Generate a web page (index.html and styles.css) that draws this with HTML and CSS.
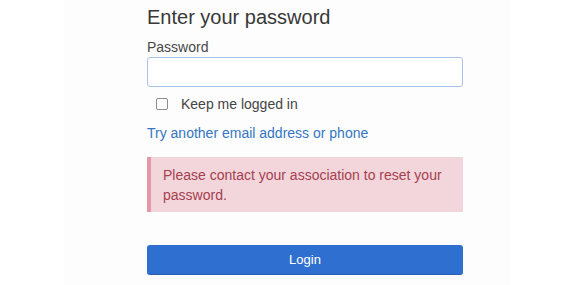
FILE: index.html
```html
<!DOCTYPE html>
<html lang="en">
<head>
    <meta charset="UTF-8">
    <meta name="viewport" content="width=device-width, initial-scale=1.0">
    <title>Login</title>
    <link rel="stylesheet" href="styles.css">
</head>
<body>
    <div id="painel">
        <form class="login-form">
            <h1>Enter your password</h1>
            <label class="rotulo" for="senha">Password</label>
            <input type="password" id="senha" class="campo">
            <label class="lembrar">
                <input type="checkbox" class="caixa">
                <span>Keep me logged in</span>
            </label>
            <a href="#" class="link-trocar">Try another email address or phone</a>
            <div class="alerta">Please contact your association to reset your password.</div>
            <button type="button" class="botao">Login</button>
        </form>
    </div>
</body>
</html>
```

FILE: styles.css
```css
body {
    margin: 0;
    background-color: #ffffff;
    font-family: "Liberation Sans", Arial, sans-serif;
    color: #3a3a3a;
}
#painel {
    margin-left: 64px;
    width: 447px;
    min-height: 285px;
    background-color: #fdfdfd;
    box-sizing: border-box;
    padding-left: 83px;
}
.login-form {
    width: 316px;
    display: flex;
    flex-direction: column;
}
h1 {
    margin: 5px 0 0 0;
    font-size: 20px;
    line-height: 24px;
    font-weight: normal;
    color: #383838;
}
.rotulo {
    margin-top: 10px;
    font-size: 14px;
    line-height: 16px;
    color: #474747;
}
.campo {
    margin: 2px 0 0 0;
    height: 30px;
    box-sizing: border-box;
    border: 1px solid #a8c3ea;
    border-radius: 3px;
    background-color: #ffffff;
    outline: none;
}
.lembrar {
    margin-top: 9px;
    display: flex;
    align-items: center;
    font-size: 14px;
    line-height: 16px;
    color: #444444;
}
.caixa {
    appearance: none;
    -webkit-appearance: none;
    box-sizing: border-box;
    width: 12px;
    height: 12px;
    margin: 0 13px 0 9px;
    border: 1px solid #8c8c8c;
    border-radius: 2px;
    background-color: #ffffff;
}
.link-trocar {
    margin-top: 13px;
    font-size: 14px;
    line-height: 16px;
    color: #3476c4;
    text-decoration: none;
}
.alerta {
    margin-top: 16px;
    padding: 8px 8px 7px 12px;
    background-color: #f3d6db;
    border-left: 4px solid #e497a6;
    color: #a5404f;
    font-size: 14px;
    line-height: 20px;
}
.botao {
    margin-top: 33px;
    height: 30px;
    border: none;
    border-radius: 3px;
    background-color: #2f6fcf;
    border-bottom: 1px solid #285fb3;
    color: #ffffff;
    font-family: "Liberation Sans", Arial, sans-serif;
    font-size: 13px;
}
```
